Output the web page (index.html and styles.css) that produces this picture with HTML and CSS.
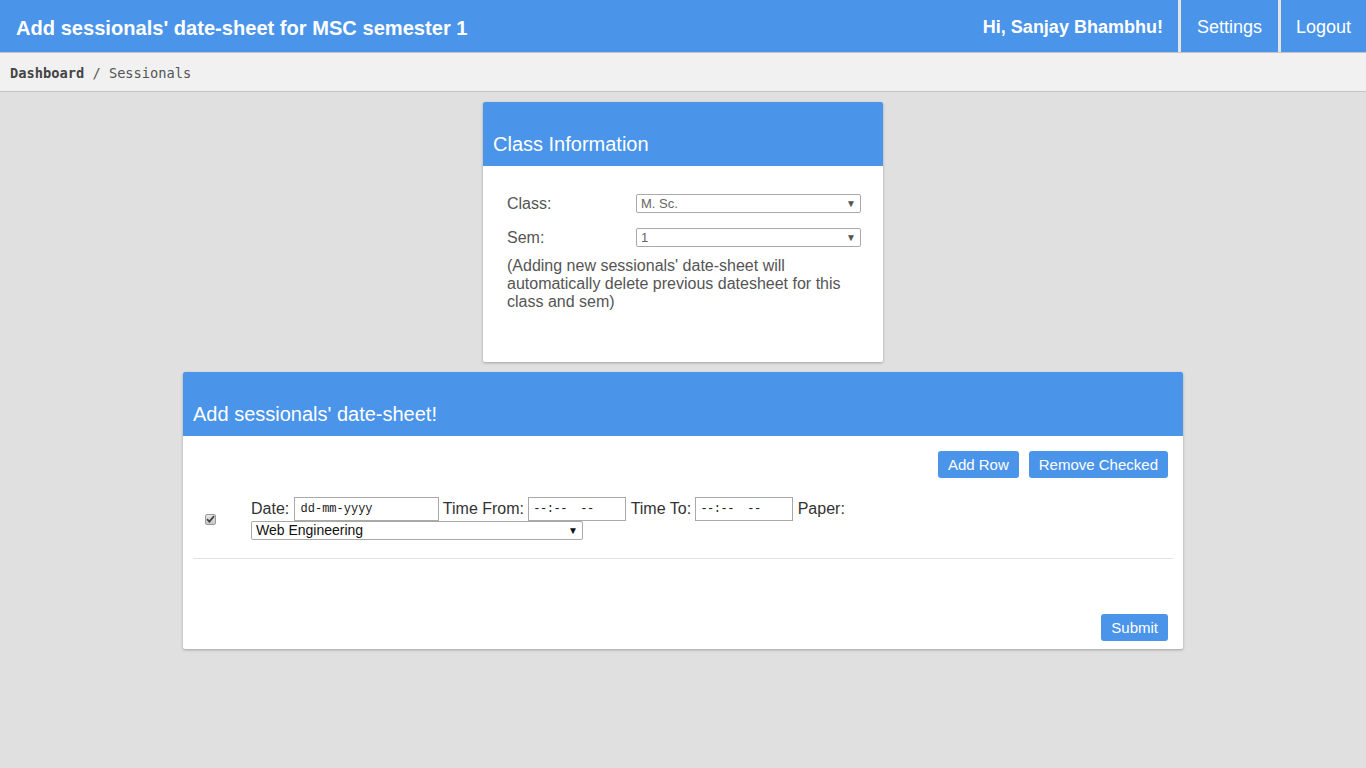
FILE: index.html
```html
<!DOCTYPE html>
<html lang="en">
<head>
<meta charset="utf-8">
<title>Add sessionals' date-sheet</title>
<link rel="stylesheet" href="styles.css">
</head>
<body>
<header class="topbar">
  <h1 class="page-title">Add sessionals' date-sheet for MSC semester 1</h1>
  <nav class="topnav">
    <span class="greet">Hi, Sanjay Bhambhu!</span>
    <a class="nav-link" href="#">Settings</a>
    <a class="nav-link" href="#">Logout</a>
  </nav>
</header>
<div class="crumbs"><b>Dashboard</b> / Sessionals</div>

<main class="content">
  <section class="card card-small">
    <div class="card-head">Class Information</div>
    <div class="card-body info-body">
      <div class="info-grid">
        <label class="lbl">Class:</label>
        <div class="sel sel-gray"><span>M. Sc.</span><i class="arrow">▼</i></div>
        <label class="lbl">Sem:</label>
        <div class="sel sel-gray"><span>1</span><i class="arrow">▼</i></div>
      </div>
      <p class="note">(Adding new sessionals' date-sheet will automatically delete previous datesheet for this class and sem)</p>
    </div>
  </section>

  <section class="card card-wide">
    <div class="card-head">Add sessionals' date-sheet!</div>
    <div class="card-body sheet-body">
      <div class="actions">
        <button class="btn">Add Row</button>
        <button class="btn">Remove Checked</button>
      </div>
      <div class="row">
        <div class="chk-cell">
          <span class="chk"><svg width="9" height="8" viewBox="0 0 9 8"><path d="M1 4.2 L3.4 6.6 L8 1.2" fill="none" stroke="#444" stroke-width="1.8"/></svg></span>
        </div>
        <div class="fields">
          <div class="line">
            <span class="flabel">Date:</span>
            <span class="inp inp-date">dd-mm-yyyy</span>
            <span class="flabel">Time From:</span>
            <span class="inp inp-time">--:--&nbsp;&nbsp;--</span>
            <span class="flabel">Time To:</span>
            <span class="inp inp-time">--:--&nbsp;&nbsp;--</span>
            <span class="flabel">Paper:</span>
          </div>
          <div class="sel sel-paper"><span>Web Engineering</span><i class="arrow arrow-dark">▼</i></div>
        </div>
      </div>
      <hr class="sep">
      <div class="submit-row"><button class="btn">Submit</button></div>
    </div>
  </section>
</main>
</body>
</html>
```

FILE: styles.css
```css
* { box-sizing: border-box; }
html, body { margin: 0; padding: 0; }
body {
  background: #e0e0e0;
  font-family: "Liberation Sans", Arial, sans-serif;
  color: #555;
  min-height: 768px;
}
.topbar {
  height: 53px;
  background: #4a94ea;
  border-bottom: 1px solid #c4c4c4;
  display: flex;
  align-items: stretch;
  justify-content: space-between;
  color: #fff;
}
.page-title {
  margin: 0;
  padding: 0 0 0 16px;
  font-size: 20.1px;
  font-weight: bold;
  line-height: 57px;
}
.topnav { display: flex; align-items: stretch; }
.greet {
  font-weight: bold;
  font-size: 18px;
  line-height: 55px;
  padding: 0 15px 0 0;
}
.nav-link {
  color: #fff;
  text-decoration: none;
  font-size: 18px;
  line-height: 54px;
  padding: 0 16px;
  border-left: 3px solid #e4e4e4;
}
.nav-link:last-child { padding-left: 15px; padding-right: 15px; }
.crumbs {
  height: 39px;
  background: #f1f1f1;
  border-bottom: 1px solid #c4c4c4;
  padding-left: 10px;
  font-family: "DejaVu Sans Mono", "Liberation Mono", monospace;
  font-size: 13.7px;
  line-height: 40px;
  color: #555;
}
.crumbs b { color: #444; }
.content {
  display: flex;
  flex-direction: column;
  align-items: center;
  gap: 10px;
  padding-top: 10px;
}
.card {
  background: #fff;
  border-radius: 2px;
  box-shadow: 0 1px 3px rgba(0,0,0,0.28);
  overflow: hidden;
}
.card-small { width: 400px; }
.card-wide { width: 1000px; }
.card-head {
  height: 64px;
  background: #4a94ea;
  color: #fff;
  font-size: 20px;
  line-height: 24px;
  padding: 30px 10px 0;
}
.info-body { padding: 28px 22px 51px 24px; }
.info-grid {
  display: grid;
  grid-template-columns: 129px 225px;
  row-gap: 15px;
  align-items: center;
}
.lbl { font-size: 16px; color: #555; line-height: 18px; }
.sel {
  position: relative;
  height: 19px;
  border: 1px solid #a9a9a9;
  border-radius: 2px;
  background: #fff;
  font-size: 13px;
  line-height: 17px;
  padding-left: 4px;
}
.sel-gray { color: #666; }
.arrow {
  position: absolute;
  right: 4px;
  top: 0;
  font-style: normal;
  font-size: 10px;
  color: #555;
}
.arrow-dark { color: #111; }
.note {
  margin: 10px 0 0;
  font-size: 16px;
  line-height: 18px;
  color: #555;
}
.sheet-body { padding: 15px 10px 8px 10px; }
.actions { display: flex; justify-content: flex-end; gap: 10px; margin-right: 5px; }
.btn {
  background: #4a94ea;
  color: #fff;
  border: 0;
  border-radius: 3px;
  height: 27px;
  padding: 0 10px;
  font-family: "Liberation Sans", Arial, sans-serif;
  font-size: 15px;
}
.row {
  display: flex;
  align-items: center;
  margin-top: 19px;
}
.chk-cell { width: 58px; padding-left: 12px; }
.chk {
  display: flex;
  width: 11px;
  height: 11px;
  border: 1px solid #9a9a9a;
  border-radius: 2px;
  background: linear-gradient(#e6e6e6, #c8c8c8);
  align-items: center;
  justify-content: center;
  margin-top: 1px;
}
.fields { display: flex; flex-direction: column; }
.line {
  display: flex;
  align-items: center;
  gap: 4.3px;
  color: #333;
}
.flabel { font-size: 16px; line-height: 18px; color: #333; }
.inp {
  height: 24px;
  border: 1px solid #a9a9a9;
  background: #fff;
  font-family: "Liberation Mono", monospace;
  font-size: 12px;
  line-height: 22px;
  color: #222;
  padding-left: 4px;
  white-space: nowrap;
}
.inp-date { width: 145px; padding-left: 6px; }
.inp-time { width: 98px; padding-left: 4px; letter-spacing: -0.5px; }
.sel-paper {
  width: 332px;
  height: 19px;
  font-size: 14px;
  color: #111;
}
.sep {
  margin: 18px 0 0;
  border: 0;
  border-top: 1px solid #e3e3e3;
}
.submit-row {
  display: flex;
  justify-content: flex-end;
  margin-top: 55px;
  margin-right: 5px;
}
```
